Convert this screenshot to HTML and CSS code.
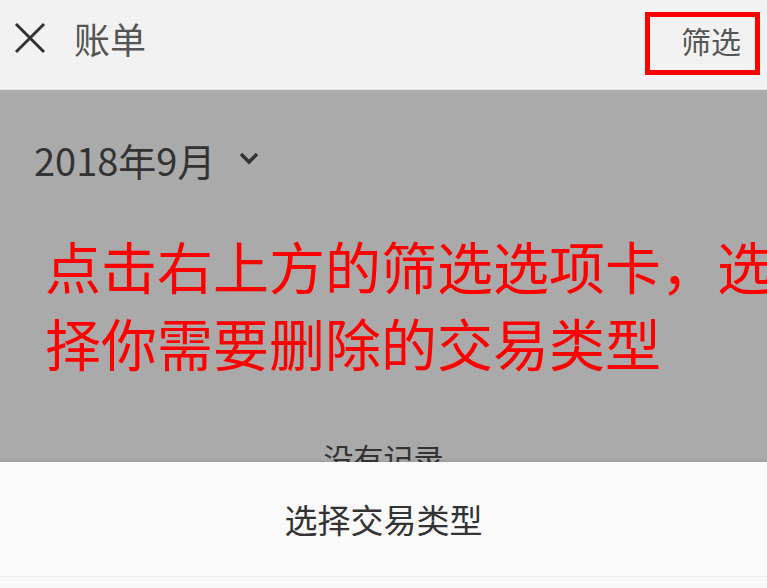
FILE: index.html
```html
<!DOCTYPE html>
<html lang="zh-CN">
<head>
    <meta charset="UTF-8">
    <meta name="viewport" content="width=device-width, initial-scale=1.0">
    <title>账单</title>
    <link rel="stylesheet" href="styles.css">
</head>
<body>
    <div class="header">
        <div class="header-left">
            <svg class="close-icon" width="32" height="32" viewBox="0 0 32 32">
                <path d="M2 2 L30 30 M30 2 L2 30" stroke="#333" stroke-width="3" fill="none"/>
            </svg>
            <span class="title">账单</span>
        </div>
        <div class="filter">筛选</div>
    </div>

    <div class="content">
        <div class="month">
            <span>2018年9月</span>
            <svg class="chevron" width="20" height="14" viewBox="0 0 20 14">
                <path d="M2 3 L10 11 L18 3" stroke="#333" stroke-width="3.4" fill="none"/>
            </svg>
        </div>
        <div class="tip">点击右上方的筛选选项卡，选<br>择你需要删除的交易类型</div>
        <div class="empty">没有记录</div>
    </div>

    <div class="sheet">
        <div class="sheet-title">选择交易类型</div>
        <div class="sheet-bottom"></div>
    </div>
</body>
</html>
```

FILE: styles.css
```css
body {
    margin: 0;
    padding: 0;
    width: 767px;
    height: 588px;
    overflow: hidden;
    font-family: "Noto Sans CJK SC", "Noto Sans", sans-serif;
    background-color: #fafafa;
}

.header {
    height: 89px;
    display: flex;
    align-items: center;
    justify-content: space-between;
    padding: 0 7px 0 14px;
    background-color: #f2f2f2;
    border-bottom: 1px solid #e2e2e2;
}

.header-left {
    display: flex;
    align-items: center;
    margin-bottom: 14px;
}

.close-icon {
    display: block;
}

.title {
    margin-left: 28px;
    font-size: 36px;
    color: #555;
}

.filter {
    width: 60px;
    height: 47px;
    line-height: 47px;
    padding: 0 14px 6px 31px;
    border: 5px solid #ff0000;
    font-size: 30px;
    color: #555;
    margin-bottom: 2px;
    box-sizing: content-box;
}

.content {
    height: 372px;
    overflow: hidden;
    background-color: #aaaaaa;
}

.month {
    display: flex;
    align-items: center;
    padding: 42px 0 0 34px;
    font-size: 38px;
    color: #333;
}

.chevron {
    margin-left: 24px;
    margin-bottom: 4px;
}

.tip {
    margin-top: 39px;
    padding-left: 45px;
    font-size: 56px;
    line-height: 77px;
    color: #ff0000;
    white-space: nowrap;
}

.empty {
    margin-top: 55px;
    text-align: center;
    font-size: 30px;
    color: #333;
}

.sheet {
    height: 126px;
    background-color: #fafafa;
    box-shadow: 0 -1px 3px rgba(0, 0, 0, 0.1);
    display: flex;
    flex-direction: column;
}

.sheet-title {
    flex: 1;
    display: flex;
    align-items: center;
    justify-content: center;
    font-size: 33px;
    color: #333;
}

.sheet-bottom {
    height: 11px;
    border-top: 1px solid #ececec;
    background-color: #f8f8f8;
}
```
